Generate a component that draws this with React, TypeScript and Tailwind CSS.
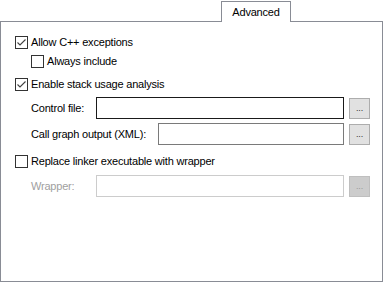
import React from 'react';

function CheckBox({ checked, label }: { checked?: boolean; label: string }) {
  return (
    <div className="flex items-center h-[13px]">
      <div className="w-[13px] h-[13px] border border-[#333333] bg-white flex items-center justify-center shrink-0">
        {checked && (
          <svg width="11" height="11" viewBox="0 0 11 11">
            <path d="M1.5 5.5 L4 8 L9.5 2.5" fill="none" stroke="#404040" strokeWidth="1.1" />
          </svg>
        )}
      </div>
      <span className="ml-[3px] leading-none">{label}</span>
    </div>
  );
}

function FileRow({
  label,
  labelWidth,
  disabled,
  focused,
}: {
  label: string;
  labelWidth: string;
  disabled?: boolean;
  focused?: boolean;
}) {
  const border = disabled ? 'border-[#cccccc]' : focused ? 'border-[#1a1a1a]' : 'border-[#7a7a7a]';
  return (
    <div className="flex items-start pl-[16px]">
      <span className={`${labelWidth} h-[22px] flex items-center shrink-0 ${disabled ? 'text-[#a0a0a0]' : ''}`}>
        {label}
      </span>
      <div className={`flex-1 h-[22px] border bg-white ${border}`} />
      <div
        className={`ml-[5px] mt-px w-[21px] h-[21px] border flex items-end justify-center pb-[5px] text-[9px] leading-none ${
          disabled ? 'bg-[#cccccc] border-[#bfbfbf] text-[#9a9a9a]' : 'bg-[#e1e1e1] border-[#adadad] text-[#333333]'
        }`}
      >
        ...
      </div>
    </div>
  );
}

export default function App() {
  return (
    <div
      className="w-[383px] h-[282px] bg-white text-black text-[11px] tracking-[-0.2px] flex flex-col"
      style={{ fontFamily: '"Liberation Sans", Arial, sans-serif' }}
    >
      <div className="h-[22px] pt-px flex shrink-0">
        <div className="ml-[221px] w-[70px] h-[21px] border border-b-0 border-[#898c95] bg-white relative z-10 flex items-center justify-center">
          Advanced
        </div>
      </div>
      <div className="-mt-px flex-1 border border-[#898c95] pl-[14px] pr-[12px] pt-[14px] flex flex-col">
        <CheckBox checked label="Allow C++ exceptions" />
        <div className="mt-[6px] pl-[16px]">
          <CheckBox label="Always include" />
        </div>
        <div className="mt-[10px]">
          <CheckBox checked label="Enable stack usage analysis" />
        </div>
        <div className="mt-[6px]">
          <FileRow label="Control file:" labelWidth="w-[65px]" focused />
        </div>
        <div className="mt-[4px]">
          <FileRow label="Call graph output (XML):" labelWidth="w-[127px]" />
        </div>
        <div className="mt-[10px]">
          <CheckBox label="Replace linker executable with wrapper" />
        </div>
        <div className="mt-[7px]">
          <FileRow label="Wrapper:" labelWidth="w-[65px]" disabled />
        </div>
      </div>
    </div>
  );
}
